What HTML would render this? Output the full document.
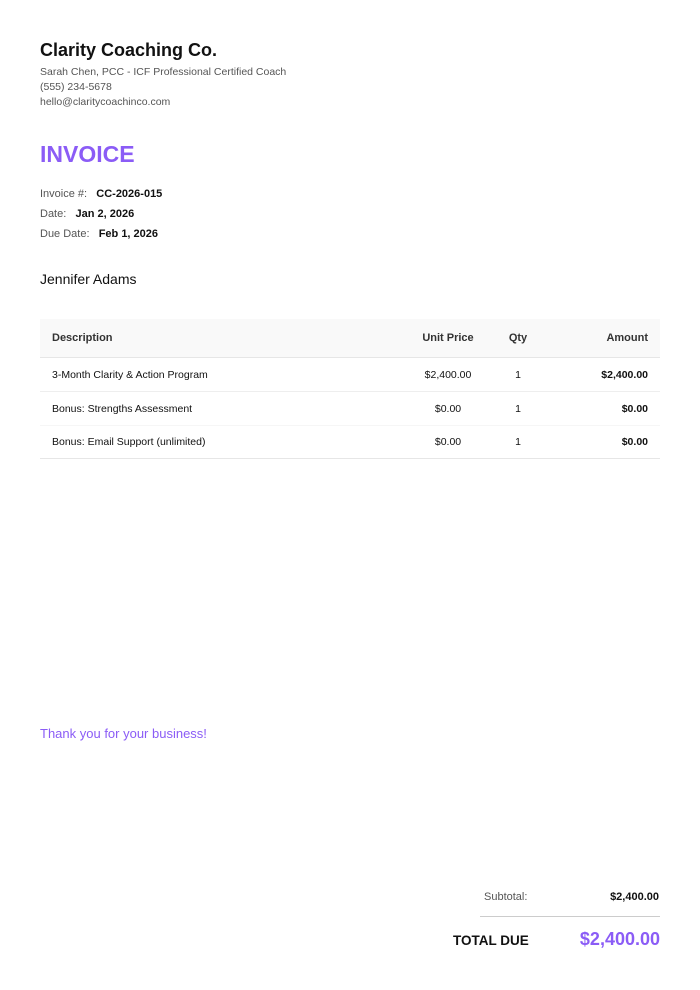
<!DOCTYPE html>
<html><head><style>
body{margin:0;width:700px;height:990px;background:#fff;font-family:"Liberation Sans",sans-serif;color:#111;position:relative}
.a{position:absolute;white-space:nowrap}
.g{color:#555}
.p{color:#8b5cf6}
.r{text-align:right}
.c{text-align:center}
</style></head><body>
<div class="a" style="left:40px;top:40px;font-size:18px;font-weight:bold">Clarity Coaching Co.</div>
<div class="a g" style="left:40px;top:65px;font-size:10.5px;line-height:15px">Sarah Chen, PCC - ICF Professional Certified Coach<br>(555) 234-5678<br>hello@claritycoachinco.com</div>
<div class="a p" style="left:40px;top:141px;font-size:23px;font-weight:bold">INVOICE</div>
<div class="a" style="left:40px;top:184px;font-size:11px;line-height:20px">
<span class="g">Invoice #:</span>&nbsp;&nbsp; <b>CC-2026-015</b><br>
<span class="g">Date:</span>&nbsp;&nbsp; <b>Jan 2, 2026</b><br>
<span class="g">Due Date:</span>&nbsp;&nbsp; <b>Feb 1, 2026</b></div>
<div class="a" style="left:40px;top:271px;font-size:14px">Jennifer Adams</div>
<div class="a" style="left:40px;top:319px;width:620px;height:38px;background:#f9f9f9;border-bottom:1px solid #e6e6e6"></div>
<div class="a" style="left:40px;top:391px;width:620px;border-top:1px solid #eee"></div>
<div class="a" style="left:40px;top:425px;width:620px;border-top:1px solid #f6f6f6"></div>
<div class="a" style="left:40px;top:458px;width:620px;border-top:1px solid #e6e6e6"></div>
<div style="font-size:11px;font-weight:bold;color:#333">
<div class="a" style="left:52px;top:332px">Description</div>
<div class="a c" style="left:408px;top:332px;width:80px">Unit Price</div>
<div class="a c" style="left:498px;top:332px;width:40px">Qty</div>
<div class="a r" style="left:548px;top:332px;width:100px">Amount</div>
</div>
<div style="font-size:10.5px">
<div class="a" style="left:52px;top:369px">3-Month Clarity &amp; Action Program</div>
<div class="a c" style="left:408px;top:369px;width:80px">$2,400.00</div>
<div class="a c" style="left:498px;top:369px;width:40px">1</div>
<div class="a r" style="left:548px;top:369px;width:100px;font-weight:bold">$2,400.00</div>
<div class="a" style="left:52px;top:403px">Bonus: Strengths Assessment</div>
<div class="a c" style="left:408px;top:403px;width:80px">$0.00</div>
<div class="a c" style="left:498px;top:403px;width:40px">1</div>
<div class="a r" style="left:548px;top:403px;width:100px;font-weight:bold">$0.00</div>
<div class="a" style="left:52px;top:436px">Bonus: Email Support (unlimited)</div>
<div class="a c" style="left:408px;top:436px;width:80px">$0.00</div>
<div class="a c" style="left:498px;top:436px;width:40px">1</div>
<div class="a r" style="left:548px;top:436px;width:100px;font-weight:bold">$0.00</div>
</div>
<div class="a p" style="left:40px;top:726px;font-size:13px">Thank you for your business!</div>
<div class="a g" style="left:484px;top:891px;font-size:11px">Subtotal:</div>
<div class="a r" style="left:540px;top:891px;width:119px;font-size:11px;font-weight:bold">$2,400.00</div>
<div class="a" style="left:480px;top:916px;width:180px;border-top:1px solid #ccc"></div>
<div class="a" style="left:453px;top:933px;font-size:13.5px;font-weight:bold">TOTAL DUE</div>
<div class="a r p" style="left:540px;top:929px;width:120px;font-size:18px;font-weight:bold">$2,400.00</div>
</body></html>
